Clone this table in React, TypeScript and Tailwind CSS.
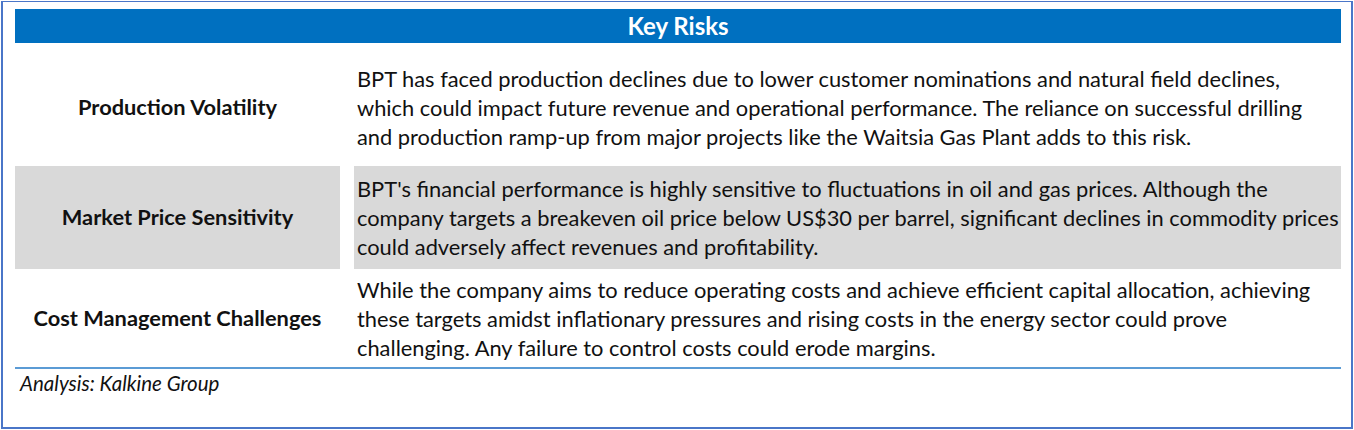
import React from "react";

const rows = [
  {
    label: "Production Volatility",
    lines: [
      "BPT has faced production declines due to lower customer nominations and natural field declines,",
      "which could impact future revenue and operational performance. The reliance on successful drilling",
      "and production ramp-up from major projects like the Waitsia Gas Plant adds to this risk.",
    ],
  },
  {
    label: "Market Price Sensitivity",
    lines: [
      "BPT's financial performance is highly sensitive to fluctuations in oil and gas prices. Although the",
      "company targets a breakeven oil price below US$30 per barrel, significant declines in commodity prices",
      "could adversely affect revenues and profitability.",
    ],
  },
  {
    label: "Cost Management Challenges",
    lines: [
      "While the company aims to reduce operating costs and achieve efficient capital allocation, achieving",
      "these targets amidst inflationary pressures and rising costs in the energy sector could prove",
      "challenging. Any failure to control costs could erode margins.",
    ],
  },
];

export default function App() {
  const font = { fontFamily: "Lato, 'Open Sans', sans-serif" };
  return (
    <div className="w-[1354px] h-[430px] bg-white" style={font}>
      <div className="ml-px mt-px w-[1352px] h-[428px] border-2 border-t border-[#4a76c8] pl-[12px] pr-[9px] pt-[7px] text-[#111]">
        <div className="h-[34px] w-[1326px] bg-[#0070c0] text-white font-bold text-[24px] flex items-center justify-center">
          Key Risks
        </div>
        <div className="flex h-[123px] w-[1326px] items-center">
          <div className="w-[325px] h-full flex items-center justify-center font-bold text-[21.8px] pt-[5px]">
            {rows[0].label}
          </div>
          <div className="ml-[14px] flex-1 pl-[3px] text-[21.85px] leading-[29px] pt-[5px]">
            {rows[0].lines.map((l, i) => (
              <div key={i} className="whitespace-nowrap">{l}</div>
            ))}
          </div>
        </div>
        <div className="flex h-[103px] w-[1326px]">
          <div className="w-[325px] h-full bg-[#d9d9d9] flex items-center justify-center font-bold text-[21.8px]">
            {rows[1].label}
          </div>
          <div className="ml-[14px] flex-1 h-full bg-[#d9d9d9] pl-[3px] text-[21.85px] leading-[29px] flex flex-col justify-center">
            {rows[1].lines.map((l, i) => (
              <div key={i} className="whitespace-nowrap">{l}</div>
            ))}
          </div>
        </div>
        <div className="flex h-[100px] w-[1326px] border-b-2 border-[#5b9bd5]">
          <div className="w-[325px] h-full flex items-center justify-center font-bold text-[21.8px]">
            {rows[2].label}
          </div>
          <div className="ml-[14px] flex-1 pl-[3px] text-[21.85px] leading-[29px] flex flex-col justify-center">
            {rows[2].lines.map((l, i) => (
              <div key={i} className="whitespace-nowrap">{l}</div>
            ))}
          </div>
        </div>
        <div className="pl-[5px] pt-[1px] italic text-[20.5px] leading-[26px]">Analysis: Kalkine Group</div>
      </div>
    </div>
  );
}
